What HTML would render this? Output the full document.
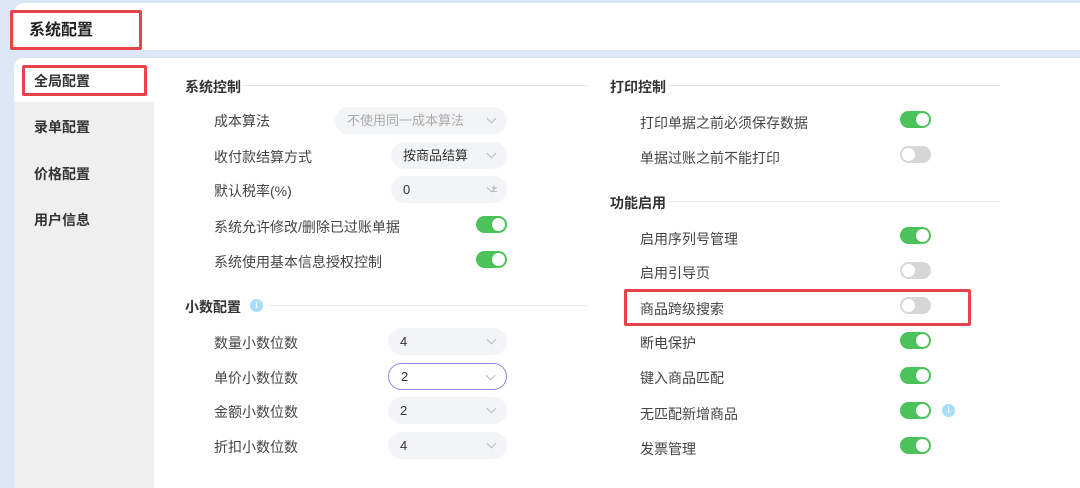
<!DOCTYPE html>
<html><head><meta charset="utf-8"><style>
*{margin:0;padding:0;box-sizing:border-box}
body{width:1080px;height:477px;overflow:hidden;background:#dde6f5;font-family:"Liberation Sans","Noto Sans CJK SC",sans-serif;font-size:14px;color:#333;position:relative}
.a{position:absolute}
.hdr{left:14px;top:3px;width:1080px;height:47px;background:#fff;border-radius:10px 0 0 10px}
.side{left:14px;top:58px;width:140px;height:430px;background:#efefef;border-radius:10px 0 0 0}
.main{left:154px;top:58px;width:940px;height:430px;background:#fff}
.act{left:14px;top:58px;width:140px;height:44px;background:#fff;border-radius:10px 0 0 0}
.nav{left:34px;font-weight:bold;font-size:14px;color:#333}
.red{border:3px solid #e8424a;border-radius:2px}
.h{font-weight:bold;font-size:14px;color:#333}
.line{height:1px;background:#e6e6e6}
.lb{font-size:14px;color:#444}
.sel{height:27px;border-radius:14px;background:#f3f4f6;font-size:13px;color:#333;padding-left:12px;line-height:27px}
.sel:after{content:"";position:absolute;right:12px;top:8px;width:6px;height:6px;border-right:1px solid #bbb;border-bottom:1px solid #bbb;transform:rotate(45deg)}
.tg{width:31px;height:17px;border-radius:9px;background:#4cc35a}
.tg:after{content:"";position:absolute;right:2px;top:2px;width:13px;height:13px;border-radius:50%;background:#fff}
.tg.off{background:#d6d6d6}
.tg.off:after{right:auto;left:2px}
.i{width:13px;height:13px;border-radius:50%;background:#a8dcf7;color:#fff;font-size:9px;text-align:center;line-height:13px;font-weight:bold}
</style></head><body>
<div class="a hdr"></div>
<div class="a" style="left:29px;top:16px;font-size:16px;font-weight:bold;color:#222">系统配置</div>
<div class="a red" style="left:10px;top:10px;width:132px;height:40px"></div>
<div class="a side"></div>
<div class="a main"></div>
<div class="a act"></div>
<div class="a nav" style="top:71px">全局配置</div>
<div class="a red" style="left:22px;top:65px;width:125px;height:31px"></div>
<div class="a nav" style="top:117px">录单配置</div>
<div class="a nav" style="top:164px">价格配置</div>
<div class="a nav" style="top:210px">用户信息</div>

<div class="a h" style="left:185px;top:77px">系统控制</div>
<div class="a line" style="left:240px;top:85px;width:348px"></div>
<div class="a lb" style="left:214px;top:111px">成本算法</div>
<div class="a sel" style="left:335px;top:107px;width:172px;color:#aaa">不使用同一成本算法</div>
<div class="a lb" style="left:214px;top:147px">收付款结算方式</div>
<div class="a sel" style="left:391px;top:142px;width:116px">按商品结算</div>
<div class="a lb" style="left:214px;top:181px">默认税率(%)</div>
<div class="a sel" style="left:391px;top:176px;width:116px">0<span class="a" style="right:10px;top:0;color:#aaa;font-size:11px">±</span></div>
<div class="a lb" style="left:214px;top:217px">系统允许修改/删除已过账单据</div>
<div class="a tg" style="left:476px;top:216px"></div>
<div class="a lb" style="left:214px;top:252px">系统使用基本信息授权控制</div>
<div class="a tg" style="left:476px;top:251px"></div>

<div class="a h" style="left:185px;top:297px">小数配置</div>
<div class="a i" style="left:250px;top:299px">i</div>
<div class="a line" style="left:270px;top:305px;width:318px"></div>
<div class="a lb" style="left:214px;top:333px">数量小数位数</div>
<div class="a sel" style="left:388px;top:328px;width:119px">4</div>
<div class="a lb" style="left:214px;top:368px">单价小数位数</div>
<div class="a sel" style="left:388px;top:363px;width:119px;background:#fff;border:1px solid #8f86d6;line-height:25px">2</div>
<div class="a lb" style="left:214px;top:402px">金额小数位数</div>
<div class="a sel" style="left:388px;top:397px;width:119px">2</div>
<div class="a lb" style="left:214px;top:437px">折扣小数位数</div>
<div class="a sel" style="left:388px;top:432px;width:119px">4</div>

<div class="a h" style="left:610px;top:77px">打印控制</div>
<div class="a line" style="left:668px;top:85px;width:332px"></div>
<div class="a lb" style="left:640px;top:113px">打印单据之前必须保存数据</div>
<div class="a tg" style="left:900px;top:111px"></div>
<div class="a lb" style="left:640px;top:148px">单据过账之前不能打印</div>
<div class="a tg off" style="left:900px;top:146px"></div>
<div class="a h" style="left:610px;top:193px">功能启用</div>
<div class="a line" style="left:668px;top:201px;width:332px"></div>
<div class="a lb" style="left:640px;top:229px">启用序列号管理</div>
<div class="a tg" style="left:900px;top:227px"></div>
<div class="a lb" style="left:640px;top:263px">启用引导页</div>
<div class="a tg off" style="left:900px;top:262px"></div>
<div class="a lb" style="left:640px;top:299px">商品跨级搜索</div>
<div class="a tg off" style="left:900px;top:297px"></div>
<div class="a red" style="left:624px;top:289px;width:347px;height:37px"></div>
<div class="a lb" style="left:640px;top:333px">断电保护</div>
<div class="a tg" style="left:900px;top:332px"></div>
<div class="a lb" style="left:640px;top:368px">键入商品匹配</div>
<div class="a tg" style="left:900px;top:367px"></div>
<div class="a lb" style="left:640px;top:404px">无匹配新增商品</div>
<div class="a tg" style="left:900px;top:402px"></div>
<div class="a i" style="left:942px;top:404px">i</div>
<div class="a lb" style="left:640px;top:439px">发票管理</div>
<div class="a tg" style="left:900px;top:437px"></div>
</body></html>
